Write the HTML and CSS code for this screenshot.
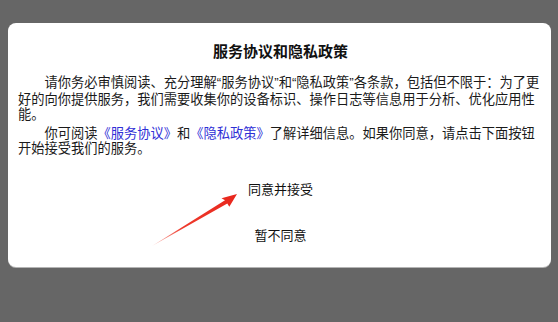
FILE: index.html
```
<!DOCTYPE html>
<html lang="zh-CN">
<head>
<meta charset="utf-8">
<title>服务协议和隐私政策</title>
<link rel="stylesheet" href="styles.css">
</head>
<body>
<div class="dialog">
  <h1 class="title">服务协议和隐私政策</h1>
  <div class="content">
    <p class="para">请你务必审慎阅读、充分理解<span class="q">“</span>服务协议<span class="q">”</span>和<span class="q">“</span>隐私政策<span class="q">”</span>各条款，包括但不限于：为了更好的向你提供服务，我们需要收集你的设备标识、操作日志等信息用于分析、优化应用性能。</p>
    <p class="para">你可阅读<a class="link" href="#">《服务协议》</a>和<a class="link" href="#">《隐私政策》</a>了解详细信息。如果你同意，请点击下面按钮开始接受我们的服务。</p>
  </div>
  <div class="actions">
    <button class="btn">同意并接受</button>
    <button class="btn">暂不同意</button>
  </div>
</div>
<svg class="arrow" width="558" height="322" viewBox="0 0 558 322" aria-hidden="true">
  <defs>
    <linearGradient id="ag" x1="152" y1="246" x2="237" y2="194" gradientUnits="userSpaceOnUse">
      <stop offset="0" stop-color="#f04a3c" stop-opacity="0.35"/>
      <stop offset="0.35" stop-color="#ee3a2c"/>
      <stop offset="1" stop-color="#e8261c"/>
    </linearGradient>
  </defs>
  <polygon points="152,246 225,200.3 221.5,198.3 237,194 229.3,206.7 227.3,203.4" fill="url(#ag)"/>
</svg>
</body>
</html>
```
FILE: styles.css
```
html, body {
  margin: 0;
  padding: 0;
}
body {
  width: 558px;
  height: 322px;
  background: #666666;
  font-family: "Noto Sans CJK SC", "Noto Sans", sans-serif;
  color: #1a1a1a;
  overflow: hidden;
  position: relative;
}
.dialog {
  box-sizing: border-box;
  margin: 23px 0 0 8px;
  width: 543px;
  height: 244px;
  background: #ffffff;
  border-radius: 8px;
  box-shadow: 0 1px 0 #b4b4b4;
  padding: 18px 8px 0 10px;
  display: flex;
  flex-direction: column;
}
.title {
  margin: 0 0 12px 0;
  font-size: 15px;
  line-height: 20px;
  font-weight: bold;
  text-align: center;
  color: #111;
}
.content {
  font-size: 13.25px;
  line-height: 15.5px;
  padding-top: 1px;
}
.para {
  margin: 0;
  text-indent: 2em;
}
.para + .para {
  margin-top: 3px;
}
.q {
  font-family: "Liberation Sans", sans-serif;
}
.link {
  color: #2f2fd6;
  text-decoration: none;
}
.actions {
  margin-top: 10px;
  display: flex;
  flex-direction: column;
}
.btn {
  height: 46px;
  border: none;
  background: transparent;
  font-family: "Noto Sans CJK SC", sans-serif;
  font-size: 13px;
  color: #111;
  padding: 0;
  margin: 0;
}
.arrow {
  position: absolute;
  left: 0;
  top: 0;
  pointer-events: none;
}
```
